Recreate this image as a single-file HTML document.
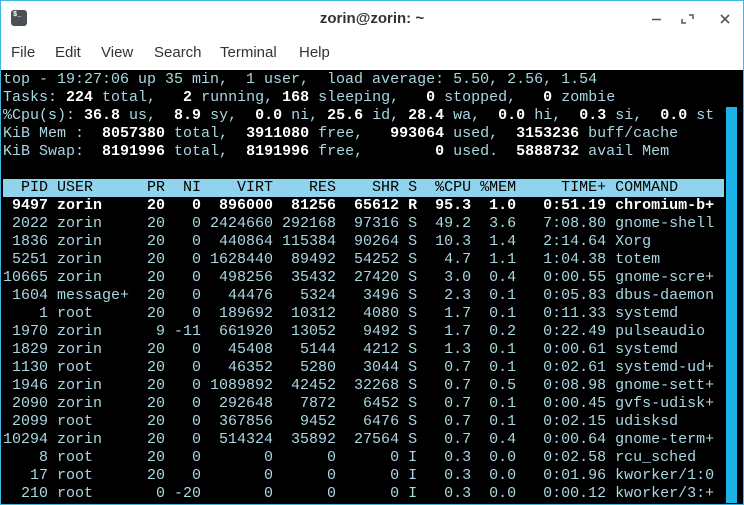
<!DOCTYPE html>
<html><head><meta charset="utf-8"><style>
html,body{margin:0;padding:0;width:744px;height:505px;overflow:hidden;background:#fff}
.win{position:absolute;left:0;top:0;width:742px;height:503px;border:1px solid #3fb6dd;background:#fff}
.title{position:absolute;left:0;top:0;width:742px;height:35px;text-align:center;font:bold 15px "Liberation Sans",sans-serif;color:#333;line-height:36px}
.icon{position:absolute;left:10px;top:9px;width:16px;height:16px;background:#4a5055;border-radius:3px;color:#fff;font:bold 7px "Liberation Mono",monospace;line-height:11px;text-indent:2px;text-align:left}
.menu{position:absolute;top:35px;left:0;height:35px;font:15px "Liberation Sans",sans-serif;color:#333;line-height:34px}
.menu span{position:absolute;white-space:nowrap}
.term{position:absolute;left:0;top:69px;width:742px;height:434px;background:#000}
pre{margin:0;position:absolute;left:2px;top:1px;font:15px/18px "Liberation Mono",monospace;color:#a9d7e1;white-space:pre}
b{color:#fff;font-weight:bold}
.hd{background:#8fd4ec;color:#000;display:inline-block;width:721px}
.sb{position:absolute;left:725px;top:37px;width:11px;height:396px;background:#1cb3e8}
</style></head><body>
<div class="win">
<div class="title">zorin@zorin: ~</div>
<div class="icon">$_</div>
<svg style="position:absolute;left:648px;top:10px" width="90" height="16">
<line x1="3" y1="8.5" x2="12" y2="8.5" stroke="#555" stroke-width="1.5"/>
<path d="M38 4h4v4M35 12h-4v-4" stroke="#555" stroke-width="1.5" fill="none" transform="translate(2,0)"/>
<path d="M72 4l8 8M80 4l-8 8" stroke="#555" stroke-width="1.6"/>
</svg>
<div class="menu"><span style="left:10px">File</span><span style="left:54px">Edit</span><span style="left:100px">View</span><span style="left:153px">Search</span><span style="left:219px">Terminal</span><span style="left:298px">Help</span></div>
<div class="term">
<pre>top - 19:27:06 up 35 min,  1 user,  load average: 5.50, 2.56, 1.54
Tasks: <b>224</b> total,   <b>2</b> running, <b>168</b> sleeping,   <b>0</b> stopped,   <b>0</b> zombie
%Cpu(s): <b>36.8</b> us,  <b>8.9</b> sy,  <b>0.0</b> ni, <b>25.6</b> id, <b>28.4</b> wa,  <b>0.0</b> hi,  <b>0.3</b> si,  <b>0.0</b> st
KiB Mem :  <b>8057380</b> total,  <b>3911080</b> free,   <b>993064</b> used,  <b>3153236</b> buff/cache
KiB Swap:  <b>8191996</b> total,  <b>8191996</b> free,        <b>0</b> used.  <b>5888732</b> avail Mem

<span class="hd">  PID USER      PR  NI    VIRT    RES    SHR S  %CPU %MEM     TIME+ COMMAND</span>
<b> 9497 zorin     20   0  896000  81256  65612 R  95.3  1.0   0:51.19 chromium-b+</b>
 2022 zorin     20   0 2424660 292168  97316 S  49.2  3.6   7:08.80 gnome-shell
 1836 zorin     20   0  440864 115384  90264 S  10.3  1.4   2:14.64 Xorg
 5251 zorin     20   0 1628440  89492  54252 S   4.7  1.1   1:04.38 totem
10665 zorin     20   0  498256  35432  27420 S   3.0  0.4   0:00.55 gnome-scre+
 1604 message+  20   0   44476   5324   3496 S   2.3  0.1   0:05.83 dbus-daemon
    1 root      20   0  189692  10312   4080 S   1.7  0.1   0:11.33 systemd
 1970 zorin      9 -11  661920  13052   9492 S   1.7  0.2   0:22.49 pulseaudio
 1829 zorin     20   0   45408   5144   4212 S   1.3  0.1   0:00.61 systemd
 1130 root      20   0   46352   5280   3044 S   0.7  0.1   0:02.61 systemd-ud+
 1946 zorin     20   0 1089892  42452  32268 S   0.7  0.5   0:08.98 gnome-sett+
 2090 zorin     20   0  292648   7872   6452 S   0.7  0.1   0:00.45 gvfs-udisk+
 2099 root      20   0  367856   9452   6476 S   0.7  0.1   0:02.15 udisksd
10294 zorin     20   0  514324  35892  27564 S   0.7  0.4   0:00.64 gnome-term+
    8 root      20   0       0      0      0 I   0.3  0.0   0:02.58 rcu_sched
   17 root      20   0       0      0      0 I   0.3  0.0   0:01.96 kworker/1:0
  210 root       0 -20       0      0      0 I   0.3  0.0   0:00.12 kworker/3:+</pre>
<div class="sb"></div>
</div>
</div>
</body></html>
